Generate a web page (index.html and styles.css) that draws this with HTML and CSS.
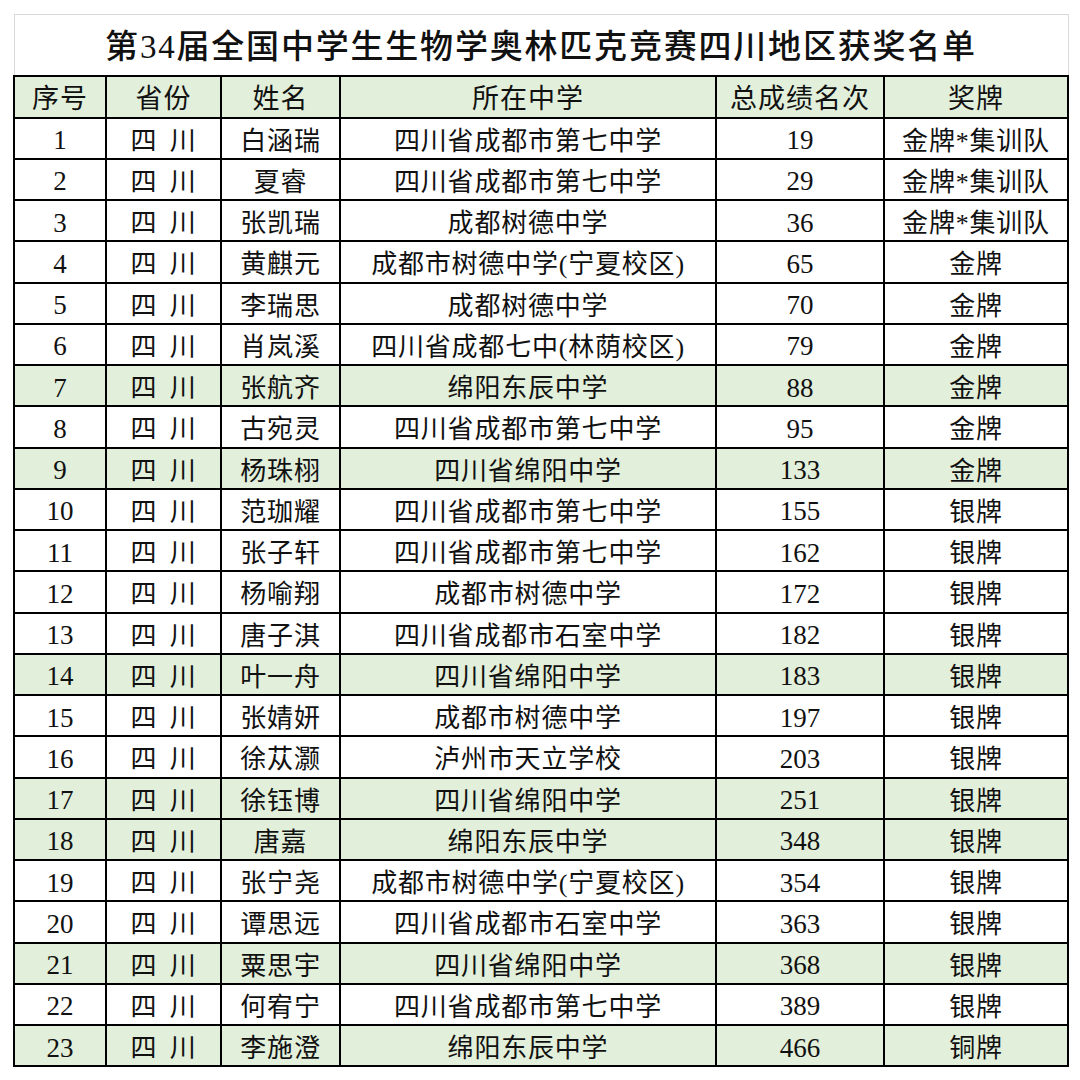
FILE: index.html
```html
<!DOCTYPE html>
<html lang="zh">
<head>
<meta charset="utf-8">
<link rel="stylesheet" href="styles.css">
</head>
<body>
<div class="sheet">
<table class="awards">
<colgroup>
<col class="c1"><col class="c2"><col class="c3"><col class="c4"><col class="c5"><col class="c6">
</colgroup>
<thead>
<tr class="title-row"><th colspan="6" class="title">第34届全国中学生生物学奥林匹克竞赛四川地区获奖名单</th></tr>
<tr class="head"><th>序号</th><th>省份</th><th>姓名</th><th>所在中学</th><th>总成绩名次</th><th>奖牌</th></tr>
</thead>
<tbody>
<tr><td>1</td><td>四 川</td><td>白涵瑞</td><td>四川省成都市第七中学</td><td>19</td><td>金牌*集训队</td></tr>
<tr><td>2</td><td>四 川</td><td>夏睿</td><td>四川省成都市第七中学</td><td>29</td><td>金牌*集训队</td></tr>
<tr><td>3</td><td>四 川</td><td>张凯瑞</td><td>成都树德中学</td><td>36</td><td>金牌*集训队</td></tr>
<tr><td>4</td><td>四 川</td><td>黄麒元</td><td>成都市树德中学(宁夏校区)</td><td>65</td><td>金牌</td></tr>
<tr><td>5</td><td>四 川</td><td>李瑞思</td><td>成都树德中学</td><td>70</td><td>金牌</td></tr>
<tr><td>6</td><td>四 川</td><td>肖岚溪</td><td>四川省成都七中(林荫校区)</td><td>79</td><td>金牌</td></tr>
<tr class="g"><td>7</td><td>四 川</td><td>张航齐</td><td>绵阳东辰中学</td><td>88</td><td>金牌</td></tr>
<tr><td>8</td><td>四 川</td><td>古宛灵</td><td>四川省成都市第七中学</td><td>95</td><td>金牌</td></tr>
<tr class="g"><td>9</td><td>四 川</td><td>杨珠栩</td><td>四川省绵阳中学</td><td>133</td><td>金牌</td></tr>
<tr><td>10</td><td>四 川</td><td>范珈耀</td><td>四川省成都市第七中学</td><td>155</td><td>银牌</td></tr>
<tr><td>11</td><td>四 川</td><td>张子轩</td><td>四川省成都市第七中学</td><td>162</td><td>银牌</td></tr>
<tr><td>12</td><td>四 川</td><td>杨喻翔</td><td>成都市树德中学</td><td>172</td><td>银牌</td></tr>
<tr><td>13</td><td>四 川</td><td>唐子淇</td><td>四川省成都市石室中学</td><td>182</td><td>银牌</td></tr>
<tr class="g"><td>14</td><td>四 川</td><td>叶一舟</td><td>四川省绵阳中学</td><td>183</td><td>银牌</td></tr>
<tr><td>15</td><td>四 川</td><td>张婧妍</td><td>成都市树德中学</td><td>197</td><td>银牌</td></tr>
<tr><td>16</td><td>四 川</td><td>徐苁灏</td><td>泸州市天立学校</td><td>203</td><td>银牌</td></tr>
<tr class="g"><td>17</td><td>四 川</td><td>徐钰博</td><td>四川省绵阳中学</td><td>251</td><td>银牌</td></tr>
<tr class="g"><td>18</td><td>四 川</td><td>唐嘉</td><td>绵阳东辰中学</td><td>348</td><td>银牌</td></tr>
<tr><td>19</td><td>四 川</td><td>张宁尧</td><td>成都市树德中学(宁夏校区)</td><td>354</td><td>银牌</td></tr>
<tr><td>20</td><td>四 川</td><td>谭思远</td><td>四川省成都市石室中学</td><td>363</td><td>银牌</td></tr>
<tr class="g"><td>21</td><td>四 川</td><td>粟思宇</td><td>四川省绵阳中学</td><td>368</td><td>银牌</td></tr>
<tr><td>22</td><td>四 川</td><td>何宥宁</td><td>四川省成都市第七中学</td><td>389</td><td>银牌</td></tr>
<tr class="g"><td>23</td><td>四 川</td><td>李施澄</td><td>绵阳东辰中学</td><td>466</td><td>铜牌</td></tr>
</tbody>
</table>
</div>
</body>
</html>
```
FILE: styles.css
```css
html, body {
  margin: 0;
  padding: 0;
  background: #ffffff;
}
.sheet {
  padding: 14px 0 0 13px;
}
.awards {
  border-collapse: collapse;
  table-layout: fixed;
  width: 1054px;
  font-family: "Liberation Serif", "Noto Sans CJK SC", serif;
  color: #111;
}
.c1 { width: 92px; }
.c2 { width: 115px; }
.c3 { width: 119px; }
.c4 { width: 376px; }
.c5 { width: 168px; }
.c6 { width: 184px; }
.title-row { height: 61px; }
.title {
  border: 1px solid #d9d9d9;
  border-bottom: 2px solid #000;
  font-size: 33px;
  font-weight: 500;
  letter-spacing: 1.8px;
  text-align: center;
  padding: 0 0 2px 0;
}
.head { height: 42px; }
.head th {
  background: #e2efda;
  border: 2px solid #000;
  font-size: 27px;
  font-weight: normal;
  letter-spacing: 1px;
  padding: 0;
}
tbody tr { height: 41.26px; }
tbody td {
  border: 2px solid #000;
  font-size: 26px;
  text-align: center;
  padding: 0;
  letter-spacing: 0.8px;
  white-space: nowrap;
}
tbody td:nth-child(1),
tbody td:nth-child(5) {
  font-size: 27px;
  letter-spacing: 0;
  padding-top: 5px;
}
tbody td:nth-child(2) {
  word-spacing: 5px;
}
tbody tr.g td {
  background: #e2efda;
}
```
